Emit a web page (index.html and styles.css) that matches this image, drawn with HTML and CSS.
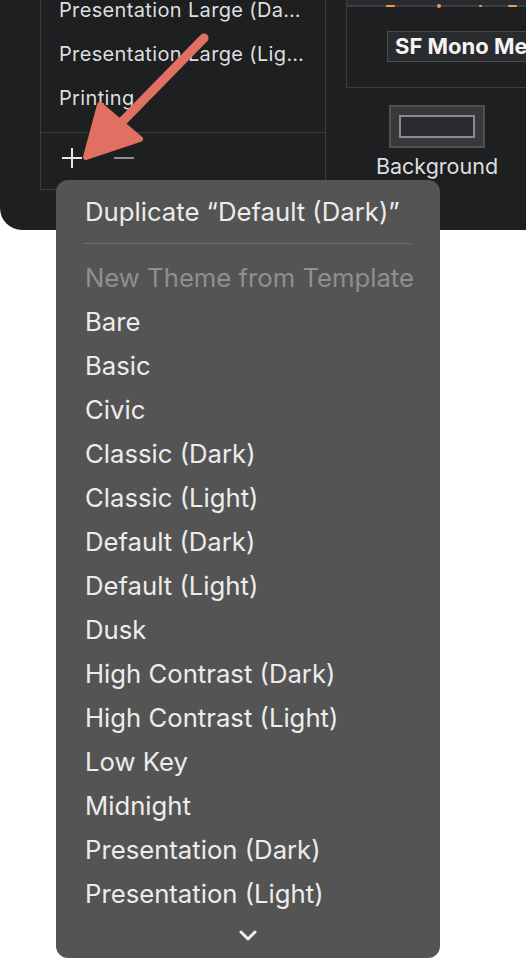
FILE: index.html
```html
<!DOCTYPE html>
<html lang="en">
<head>
    <meta charset="UTF-8">
    <meta name="viewport" content="width=device-width, initial-scale=1.0">
    <title>Themes</title>
    <link rel="stylesheet" href="styles.css">
</head>
<body>
    <div class="window">
        <div class="theme-list">
            <ul class="themes">
                <li>Presentation Large (Da…</li>
                <li>Presentation Large (Lig…</li>
                <li>Printing</li>
            </ul>
            <div class="list-tools">
                <span class="tool plus"></span>
                <span class="tool minus"></span>
            </div>
        </div>

        <div class="editor">
            <div class="font-box">
                <div class="font-preview">
                    <i class="mark" style="margin-left: 39px; width: 9px;"></i>
                    <i class="mark dot" style="margin-left: 42px;"></i>
                    <i class="mark" style="margin-left: 38px; width: 3px;"></i>
                    <i class="mark" style="margin-left: 26px; width: 9px;"></i>
                </div>
                <div class="font-field">SF Mono Medium</div>
            </div>
            <div class="color-well">
                <div class="well"><div class="swatch"></div></div>
                <span class="well-label">Background</span>
            </div>
        </div>
    </div>

    <!-- callout arrow pointing at the add button -->
    <svg class="callout" width="526" height="240" viewBox="0 0 526 240">
        <line x1="204" y1="38" x2="118" y2="126" stroke="#e07062" stroke-width="9" stroke-linecap="round"/>
        <polygon points="86,157 100,105 140,139" fill="#e07062" stroke="#e07062" stroke-width="6" stroke-linejoin="round"/>
    </svg>

    <div class="menu">
        <div class="menu-item">Duplicate “Default (Dark)”</div>
        <div class="menu-sep"></div>
        <div class="menu-item disabled">New Theme from Template</div>
        <div class="menu-item">Bare</div>
        <div class="menu-item">Basic</div>
        <div class="menu-item">Civic</div>
        <div class="menu-item">Classic (Dark)</div>
        <div class="menu-item">Classic (Light)</div>
        <div class="menu-item">Default (Dark)</div>
        <div class="menu-item">Default (Light)</div>
        <div class="menu-item">Dusk</div>
        <div class="menu-item">High Contrast (Dark)</div>
        <div class="menu-item">High Contrast (Light)</div>
        <div class="menu-item">Low Key</div>
        <div class="menu-item">Midnight</div>
        <div class="menu-item">Presentation (Dark)</div>
        <div class="menu-item">Presentation (Light)</div>
        <div class="menu-more">
            <svg width="20" height="12" viewBox="0 0 20 12">
                <polyline points="3,2 10,9 17,2" fill="none" stroke="#f2f2f2" stroke-width="3" stroke-linecap="round" stroke-linejoin="round"/>
            </svg>
        </div>
    </div>
</body>
</html>
```

FILE: styles.css
```css
:root {
    --window-bg: #1e1f21;
    --line: #3b3c3f;
    --text: #dedede;
    --menu-bg: #545454;
}

body {
    margin: 0;
    background: #ffffff;
    font-family: 'Inter', 'Noto Sans', sans-serif;
    position: relative;
    overflow: hidden;
    height: 960px;
}

.window {
    display: flex;
    height: 230px;
    background: var(--window-bg);
    border-bottom-left-radius: 22px;
    overflow: hidden;
}

/* left: theme list */
.theme-list {
    flex-shrink: 0;
    margin-left: 40px;
    width: 284px;
    height: 189px;
    border: 1px solid var(--line);
    border-top: none;
    display: flex;
    flex-direction: column;
}

.themes {
    list-style: none;
    margin: 0;
    padding: 0;
    height: 132px;
    overflow: hidden;
    flex-shrink: 0;
}

.themes li {
    padding: 12px 0 12px 18px;
    line-height: 20px;
    font-size: 20px;
    letter-spacing: 0.35px;
    color: var(--text);
    white-space: nowrap;
}

.themes li:first-child {
    padding-top: 0;
}

.list-tools {
    flex: 1;
    border-top: 1px solid var(--line);
    display: flex;
    align-items: center;
    gap: 32px;
    padding: 0 0 6px 21px;
}

.tool {
    position: relative;
    width: 20px;
    height: 20px;
}

.tool::before,
.plus::after {
    content: '';
    position: absolute;
    left: 0;
    top: 9px;
    width: 20px;
    height: 2px;
    background: #e6e6e6;
}

.plus::after {
    transform: rotate(90deg);
}

.minus::before {
    background: #8e8e90;
}

/* right: theme editor */
.editor {
    margin-left: 20px;
    flex: 1;
    min-width: 0;
    display: flex;
    flex-direction: column;
}

.font-box {
    height: 87px;
    border-left: 1px solid var(--line);
    border-bottom: 1px solid var(--line);
}

.font-preview {
    height: 5px;
    background: #2a2b2f;
    border-bottom: 2px solid #3c3d41;
    display: flex;
    align-items: flex-end;
}

.mark {
    display: block;
    height: 2px;
    margin-bottom: -2px;
    background: #f39a4e;
    border-radius: 1px;
}

.mark.dot {
    width: 4px;
    height: 4px;
    margin-bottom: -3px;
    border-radius: 50%;
}

.font-field {
    margin: 24px 0 0 40px;
    height: 29px;
    line-height: 29px;
    background: #2a2b2f;
    border: 1px solid #4a4b4e;
    border-right: none;
    padding-left: 7px;
    font-size: 22px;
    font-weight: 700;
    color: #f4f4f4;
    white-space: nowrap;
    overflow: hidden;
}

.color-well {
    margin: 17px 0 0 28px;
    width: 126px;
    display: flex;
    flex-direction: column;
    align-items: center;
    gap: 5px;
}

.well {
    width: 92px;
    height: 39px;
    background: #38393b;
    border: 2px solid #4f5052;
    display: flex;
    align-items: center;
    justify-content: center;
}

.swatch {
    width: 72px;
    height: 19px;
    background: #2a2b30;
    border: 2px solid #8b8b8d;
}

.well-label {
    font-size: 21.5px;
    color: var(--text);
    white-space: nowrap;
}

.callout {
    position: absolute;
    left: 0;
    top: 0;
    pointer-events: none;
}

/* popup menu */
.menu {
    position: absolute;
    left: 56px;
    top: 180px;
    width: 384px;
    height: 768px;
    padding-top: 10px;
    background: var(--menu-bg);
    border-radius: 12px;
}

.menu-item {
    height: 44px;
    line-height: 44px;
    padding-left: 29px;
    font-size: 25.7px;
    color: #ececec;
    white-space: nowrap;
}

.menu-item.disabled {
    color: #8f8f8f;
}

.menu-sep {
    height: 1px;
    margin: 9px 29px 12px 28px;
    background: #707070;
}

.menu-more {
    height: 40px;
    display: flex;
    align-items: center;
    justify-content: center;
}
```
